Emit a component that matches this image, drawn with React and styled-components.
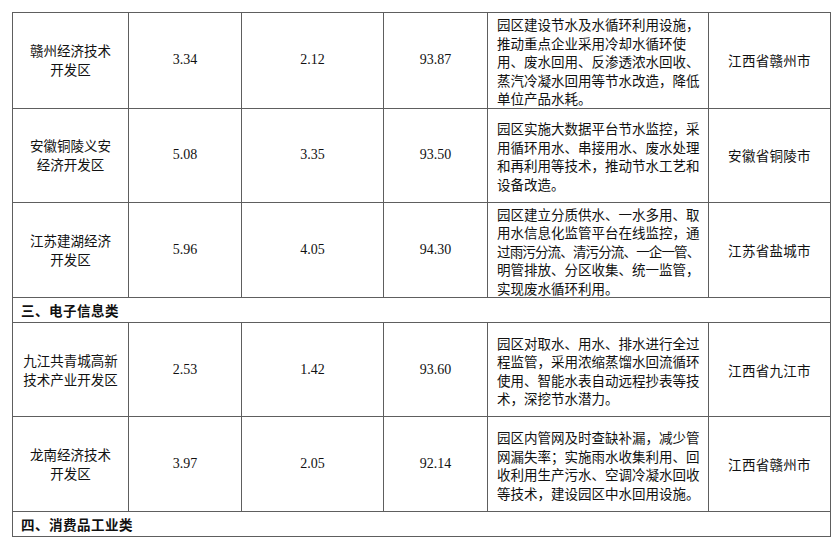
import React from 'react';
import styled, { createGlobalStyle } from 'styled-components';

const GlobalStyle = createGlobalStyle`
  html, body {
    margin: 0;
    padding: 0;
    background: #ffffff;
  }
`;

const Page = styled.div`
  padding: 12px 0 0 12px;
  background: #ffffff;
  color: #111;
  font-family: 'Noto Sans CJK SC', 'Noto Sans', sans-serif;
  text-spacing-trim: space-all;
`;

const Table = styled.table`
  width: 818px;
  border-collapse: collapse;
  table-layout: fixed;
`;

const Row = styled.tr`
  height: ${(p) => p.$h}px;
`;

const Cell = styled.td`
  border: 1px solid #5e5e5e;
  padding: 0;
  vertical-align: middle;
  text-align: center;
`;

const NameCell = styled(Cell)`
  font-size: 13.5px;
  letter-spacing: 0.5px;
  line-height: 19px;
`;

const NumCell = styled(Cell)`
  font-family: 'Liberation Serif', 'Times New Roman', serif;
  font-size: 14px;
`;

const DescCell = styled(Cell)`
  text-align: left;
  padding: 2px 0 0 9px;
  font-size: 13.5px;
  line-height: 18.5px;
  white-space: nowrap;
`;

const CityCell = styled(Cell)`
  font-size: 13.5px;
  letter-spacing: 0.3px;
`;

const SectionCell = styled(Cell)`
  text-align: left;
  padding-left: 8px;
  font-size: 13.5px;
  font-weight: 700;
  letter-spacing: 0.5px;
`;

const Line = styled.span`
  display: block;
  letter-spacing: ${(p) => (p.$tight ? '-0.85px' : '0')};
`;

const widths = [116, 113, 142, 104, 221, 122];

const parks = [
  {
    name: ['赣州经济技术', '开发区'],
    a: '3.34',
    b: '2.12',
    c: '93.87',
    desc: [
      '园区建设节水及水循环利用设施，',
      '推动重点企业采用冷却水循环使',
      '用、废水回用、反渗透浓水回收、',
      '蒸汽冷凝水回用等节水改造，降低',
      '单位产品水耗。',
    ],
    city: '江西省赣州市',
    h: 95,
  },
  {
    name: ['安徽铜陵义安', '经济开发区'],
    a: '5.08',
    b: '3.35',
    c: '93.50',
    desc: [
      '园区实施大数据平台节水监控，采',
      '用循环用水、串接用水、废水处理',
      '和再利用等技术，推动节水工艺和',
      '设备改造。',
    ],
    city: '安徽省铜陵市',
    h: 94,
  },
  {
    name: ['江苏建湖经济', '开发区'],
    a: '5.96',
    b: '4.05',
    c: '94.30',
    desc: [
      '园区建立分质供水、一水多用、取',
      '用水信息化监管平台在线监控，通',
      { text: '过雨污分流、清污分流、一企一管、', tight: true },
      '明管排放、分区收集、统一监管，',
      '实现废水循环利用。',
    ],
    city: '江苏省盐城市',
    h: 95,
  },
  { section: '三、电子信息类' },
  {
    name: ['九江共青城高新', '技术产业开发区'],
    a: '2.53',
    b: '1.42',
    c: '93.60',
    desc: [
      '园区对取水、用水、排水进行全过',
      '程监管，采用浓缩蒸馏水回流循环',
      '使用、智能水表自动远程抄表等技',
      '术，深挖节水潜力。',
    ],
    city: '江西省九江市',
    h: 94,
  },
  {
    name: ['龙南经济技术', '开发区'],
    a: '3.97',
    b: '2.05',
    c: '92.14',
    desc: [
      '园区内管网及时查缺补漏，减少管',
      '网漏失率；实施雨水收集利用、回',
      '收利用生产污水、空调冷凝水回收',
      '等技术，建设园区中水回用设施。',
    ],
    city: '江西省赣州市',
    h: 95,
  },
  { section: '四、消费品工业类' },
];

const App = () => {
  return (
    <Page>
      <GlobalStyle />
      <Table>
        <colgroup>
          {widths.map((w, i) => (
            <col key={i} style={{ width: w }} />
          ))}
        </colgroup>
        <tbody>
          {parks.map((p, i) =>
            p.section ? (
              <Row key={i} $h={25}>
                <SectionCell colSpan={6}>{p.section}</SectionCell>
              </Row>
            ) : (
              <Row key={i} $h={p.h}>
                <NameCell>
                  {p.name.map((n) => (
                    <Line key={n}>{n}</Line>
                  ))}
                </NameCell>
                <NumCell>{p.a}</NumCell>
                <NumCell>{p.b}</NumCell>
                <NumCell>{p.c}</NumCell>
                <DescCell>
                  {p.desc.map((d, j) =>
                    typeof d === 'string' ? (
                      <Line key={j}>{d}</Line>
                    ) : (
                      <Line key={j} $tight={d.tight}>
                        {d.text}
                      </Line>
                    )
                  )}
                </DescCell>
                <CityCell>{p.city}</CityCell>
              </Row>
            )
          )}
        </tbody>
      </Table>
    </Page>
  );
};

export default App;
